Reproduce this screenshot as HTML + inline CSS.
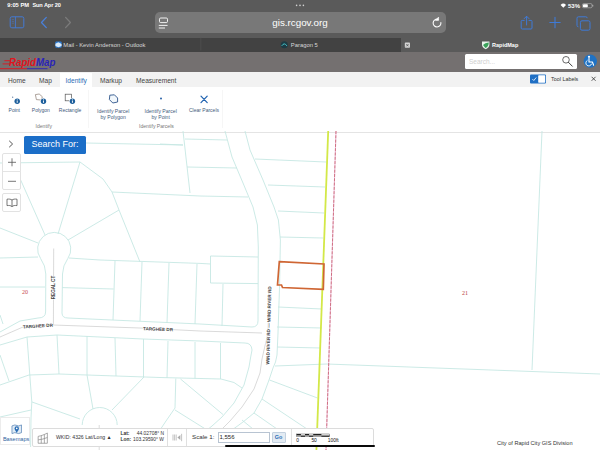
<!DOCTYPE html>
<html>
<head>
<meta charset="utf-8">
<title>RapidMap</title>
<style>
html,body{margin:0;padding:0;}
body{width:600px;height:450px;overflow:hidden;position:relative;background:#fff;font-family:"Liberation Sans",sans-serif;}
.abs{position:absolute;}
.t{position:absolute;white-space:nowrap;line-height:1;}
#chrome{left:0;top:0;width:600px;height:38px;background:#5a5a5a;}
#tabs{left:0;top:37.8px;width:600px;height:14px;background:#424242;}
#tabact{left:400.5px;top:37.8px;width:199.5px;height:14px;background:#5a5a5a;}
#apphdr{left:0;top:51.8px;width:600px;height:19.8px;background:#747070;}
#url{left:154.6px;top:12.2px;width:291.4px;height:21.2px;background:#787878;border-radius:5px;}
#rtabs{left:0;top:71.6px;width:600px;height:15px;background:#f2f2f2;}
#ribbon{left:0;top:87px;width:600px;height:45.3px;background:#fff;border-bottom:0.8px solid #e4e4e4;}
#map{left:0;top:131px;width:600px;height:319px;}
</style>
</head>
<body>
<!-- browser chrome -->
<div id="chrome" class="abs"></div>
<div class="t" style="left:7.3px;top:2.7px;font-size:5.75px;font-weight:bold;color:#fff;">9:05 PM</div>
<div class="t" style="left:32.4px;top:2.7px;font-size:5.6px;font-weight:bold;color:#fff;letter-spacing:-0.1px;">Sun Apr 20</div>
<div class="t" style="left:568px;top:2.5px;font-size:6px;font-weight:bold;color:#fff;">53%</div>
<div id="url" class="abs"></div>
<div class="t" style="left:272.3px;top:17.6px;font-size:9.8px;color:#fff;">gis.rcgov.org</div>
<div id="tabs" class="abs"></div>
<div id="tabact" class="abs"></div>
<div class="t" style="left:63.3px;top:42.9px;font-size:5.85px;color:#d8d8d8;">Mail - Kevin Anderson - Outlook</div>
<div class="t" style="left:290.8px;top:42.9px;font-size:5.85px;color:#d8d8d8;">Paragon 5</div>
<div class="t" style="left:492px;top:43.1px;font-size:5.5px;font-weight:bold;color:#fff;">RapidMap</div>

<!-- chrome icons -->
<svg class="abs" style="left:0;top:0;" width="600" height="52" viewBox="0 0 600 52">
<circle cx="296.6" cy="5.4" r="0.8" fill="#d0d0d0"/><circle cx="300" cy="5.4" r="0.8" fill="#d0d0d0"/><circle cx="303.4" cy="5.4" r="0.8" fill="#d0d0d0"/>
<!-- wifi -->
<path d="M560.6,4.9 A3.9,3.9 0 0 1 566,4.9 L563.3,7.8 Z" fill="#fff"/>
<!-- battery -->
<rect x="582.4" y="3.6" width="9.6" height="4.2" rx="1.2" fill="none" stroke="#cfcfcf" stroke-width="0.5"/>
<rect x="583" y="4.2" width="4.8" height="3" rx="0.7" fill="#fff"/>
<rect x="592.5" y="4.9" width="0.7" height="1.6" fill="#cfcfcf"/>
<!-- sidebar -->
<rect x="10.2" y="16.8" width="13.6" height="11" rx="1.6" fill="none" stroke="#4479d2" stroke-width="1"/>
<path d="M15.4,16.8 V27.8" stroke="#4479d2" stroke-width="0.9"/>
<path d="M11.8,19.6 H14 M11.8,21.4 H14 M11.8,23.2 H14" stroke="#4479d2" stroke-width="0.5"/>
<!-- back / fwd -->
<path d="M46.3,17.4 L41.5,22.5 L46.3,27.6" fill="none" stroke="#4a80da" stroke-width="1.3" stroke-linecap="round" stroke-linejoin="round"/>
<path d="M65.6,17.4 L70.4,22.5 L65.6,27.6" fill="none" stroke="#7b7b7b" stroke-width="1.3" stroke-linecap="round" stroke-linejoin="round"/>
<!-- reader -->
<rect x="159.5" y="18" width="8" height="4.6" rx="1.2" fill="none" stroke="#fff" stroke-width="0.9"/>
<path d="M159.2,25.4 H167.2 M159.2,28 H164.6" stroke="#fff" stroke-width="0.9" stroke-linecap="round"/>
<!-- reload -->
<path d="M440.9,22.6 A3.9,3.9 0 1 1 438,19.3" fill="none" stroke="#fff" stroke-width="1.1" stroke-linecap="round"/>
<path d="M438.6,17 V20.4 H435.4 Z" fill="#fff" stroke="#fff" stroke-width="0.5" stroke-linejoin="round"/>
<!-- share -->
<path d="M524.6,20.4 H522.2 Q521.2,20.4 521.2,21.4 V28 Q521.2,29 522.2,29 H531 Q532,29 532,28 V21.4 Q532,20.4 531,20.4 H528.6" fill="none" stroke="#3f7ad6" stroke-width="1"/>
<path d="M526.6,25 V16.4 M524.2,18.6 L526.6,16.2 L529,18.6" fill="none" stroke="#3f7ad6" stroke-width="1" stroke-linecap="round" stroke-linejoin="round"/>
<!-- plus -->
<path d="M549.8,22.5 H560.2 M555,17.3 V27.7" stroke="#3f7ad6" stroke-width="1.1" stroke-linecap="round"/>
<!-- tabs -->
<rect x="580.4" y="20.8" width="9.6" height="9.4" rx="1.6" fill="#5a5a5a" stroke="#3f7ad6" stroke-width="1"/>
<path d="M578.4,26.8 Q577,26.8 577,25.4 V18.2 Q577,16.8 578.4,16.8 H585.8 Q587.2,16.8 587.2,18.2" fill="none" stroke="#3f7ad6" stroke-width="1"/>
<!-- tab separators / icons -->
<rect x="200.6" y="37.5" width="0.6" height="13" fill="#555"/>
<rect x="55.4" y="41.5" width="6.2" height="6.2" rx="0.8" fill="#2c7cd4"/>
<path d="M55.4,43.7 L58.4,42.3 L61.6,44.1 V46.1 L58.4,47.3 L55.4,45.9 Z" fill="#d7e9fb"/>
<circle cx="284.3" cy="44.7" r="3.5" fill="#1d3b44"/>
<path d="M281.7,45.9 Q284.3,41.9 286.9,45.9" fill="none" stroke="#46c2c8" stroke-width="1"/>
<rect x="404.8" y="42.6" width="5.2" height="5.2" rx="0.8" fill="#d4d4d4"/>
<path d="M406.3,44.1 L408.5,46.3 M408.5,44.1 L406.3,46.3" stroke="#444" stroke-width="0.7"/>
<path d="M482,41.4 H489.4 V44.6 Q489.4,48 485.7,49.2 Q482,48 482,44.6 Z" fill="#e9f4ec"/>
<path d="M483,45 Q485,42.6 488.8,42.4 Q488.6,46.6 485.4,48 Z" fill="#3aa35a"/>
</svg>
<!-- app header -->
<div id="apphdr" class="abs"></div>
<div class="t" style="left:9.4px;top:57.4px;font-size:11.5px;font-weight:bold;font-style:italic;color:#e0141e;transform:scaleX(0.845);transform-origin:0 0;">Rapid<span style="color:#2a24b8;">Map</span></div>
<div class="abs" style="left:465px;top:54px;width:112px;height:15px;background:#fff;border-radius:1.5px;"></div>
<div class="t" style="left:469px;top:58.5px;font-size:6.5px;color:#cfcfcf;">Search...</div>
<!-- ribbon tabs -->
<div id="rtabs" class="abs"></div>
<div class="abs" style="left:60px;top:73px;width:31.6px;height:14px;background:#fff;"></div>
<div class="t" style="left:8px;top:77.9px;font-size:6.6px;color:#444;">Home</div>
<div class="t" style="left:39px;top:77.9px;font-size:6.6px;color:#444;">Map</div>
<div class="t" style="left:65.5px;top:77.9px;font-size:6.6px;color:#2a6db5;">Identify</div>
<div class="t" style="left:100px;top:77.9px;font-size:6.6px;color:#444;">Markup</div>
<div class="t" style="left:136px;top:77.9px;font-size:6.6px;color:#444;">Measurement</div>
<div class="t" style="left:551px;top:76.5px;font-size:5.4px;color:#333;">Tool Labels</div>
<!-- app header icons -->
<svg class="abs" style="left:0;top:51px;" width="600" height="36" viewBox="0 51 600 36">
<path d="M4.4,60.7 H11 M2.6,63.9 H10 M0,68.7 H27" stroke="#e0141e" stroke-width="0.9"/><path d="M27,68.7 H47.5" stroke="#2a24b8" stroke-width="0.9"/>
<circle cx="566" cy="59.8" r="3.3" fill="none" stroke="#444" stroke-width="0.8"/>
<path d="M568.4,62.3 L572.3,66.2" stroke="#444" stroke-width="1" stroke-linecap="round"/>
<circle cx="590.3" cy="61.2" r="6.6" fill="#1f72c4"/>
<circle cx="589" cy="56.8" r="1.1" fill="#fff"/>
<path d="M589,58.4 V62 H592.4 L593.6,65.2" fill="none" stroke="#fff" stroke-width="1.1" stroke-linecap="round" stroke-linejoin="round"/>
<path d="M587.2,60.4 A3,3 0 1 0 591.6,64" fill="none" stroke="#fff" stroke-width="0.9" stroke-linecap="round"/>
<!-- toggle -->
<rect x="530" y="74.5" width="16" height="9" rx="1" fill="#1f6fc4"/>
<rect x="538.2" y="75.3" width="7" height="7.4" rx="0.6" fill="#fff"/>
<path d="M532.4,79.1 L533.8,80.5 L536.2,77.5" fill="none" stroke="#fff" stroke-width="0.8"/>
<path d="M591.6,76.8 L595.6,80.8 M595.6,76.8 L591.6,80.8" stroke="#333" stroke-width="0.8"/>
</svg>
<!-- ribbon -->
<div id="ribbon" class="abs"></div>
<div class="t" style="left:8.6px;top:108.1px;font-size:5px;color:#3f5a7c;">Point</div>
<div class="t" style="left:31.8px;top:108.1px;font-size:5px;color:#3f5a7c;">Polygon</div>
<div class="t" style="left:58.8px;top:108.1px;font-size:5px;color:#3f5a7c;">Rectangle</div>
<div class="t" style="left:35.5px;top:123.8px;font-size:5.1px;color:#777;">Identify</div>
<div class="t" style="left:97px;top:107.9px;font-size:5.1px;color:#3f5a7c;text-align:center;line-height:6.2px;">Identify Parcel<br>by Polygon</div>
<div class="t" style="left:144.5px;top:107.9px;font-size:5.1px;color:#3f5a7c;text-align:center;line-height:6.2px;">Identify Parcel<br>by Point</div>
<div class="t" style="left:189px;top:108.1px;font-size:5px;color:#3f5a7c;">Clear Parcels</div>
<div class="t" style="left:139px;top:123.8px;font-size:5.1px;color:#777;">Identify Parcels</div>

<svg class="abs" style="left:0;top:86px;" width="240" height="46" viewBox="0 86 240 46">
<circle cx="12.7" cy="97.2" r="0.6" fill="#4a6c94"/>
<circle cx="17.2" cy="101.3" r="2.7" fill="#1d5f9c"/><rect x="16.75" y="100.6" width="0.9" height="2.2" fill="#fff"/><circle cx="17.2" cy="99.8" r="0.5" fill="#fff"/>
<path d="M35.4,94.6 L39.2,94 L42.4,96.8 L41,100 L36.4,99.6 Z" fill="none" stroke="#8a7a70" stroke-width="0.7"/>
<circle cx="43.5" cy="101.3" r="3.3" fill="#fff"/>
<circle cx="43.5" cy="101.3" r="2.7" fill="#1d5f9c"/><rect x="43.05" y="100.6" width="0.9" height="2.2" fill="#fff"/><circle cx="43.5" cy="99.8" r="0.5" fill="#fff"/>
<rect x="65.2" y="94.2" width="6.4" height="6.6" fill="none" stroke="#555" stroke-width="0.7"/>
<circle cx="72.4" cy="101.3" r="3.3" fill="#fff"/>
<circle cx="72.4" cy="101.3" r="2.7" fill="#1d5f9c"/><rect x="71.95" y="100.6" width="0.9" height="2.2" fill="#fff"/><circle cx="72.4" cy="99.8" r="0.5" fill="#fff"/>
<path d="M109.8,95.2 L114.4,94.8 L117.6,98 L117.6,102 L112.8,103 L109.4,99.6 Z" fill="#f1f7fc" stroke="#2d548a" stroke-width="0.9" stroke-linejoin="round"/>
<circle cx="161" cy="98.6" r="1" fill="#2a62a8"/>
<path d="M201,96.2 L207.2,102.6 M207.2,96.2 L201,102.6" stroke="#1f62b0" stroke-width="1.2" stroke-linecap="round"/>
<rect x="88" y="90" width="0.5" height="38" fill="#ececec"/>
<rect x="222.5" y="90" width="0.5" height="38" fill="#ececec"/>
</svg>
<!-- map -->
<div id="map" class="abs">
<svg id="mapsvg" width="600" height="319" viewBox="0 131 600 319" style="position:absolute;left:0;top:0;">
<g fill="none" stroke="#c6e8e3" stroke-width="0.9" stroke-linejoin="round">
<path d="M0,163 L80,162"/>
<path d="M80,162 L103,179 L112,192 L119,210 L140,262"/>
<path d="M80,162 L58,234"/>
<path d="M119,210 L68,240"/>
<path d="M0,135 L22,183 L45,235"/>
<path d="M0,228 L38,243"/>
<path d="M0,258 L38,257"/>
<path d="M112,192 L200,196 L248,197"/>
<path d="M86,143 L183,145"/>
<path d="M160,144 L183,145"/>
<path d="M183,131 L190,193"/>
<path d="M185,139 L227,140"/>
<path d="M187,167 L237,168"/>
<path d="M45.8,274 Q45.6,265.5 40.6,258.5 A16.6,16.6 0 1 1 67.8,258.5 Q62.8,265.5 62.5,274"/>
<path d="M45.8,274 L45.6,312 Q45.5,318 38,318 L20,321 L0,332"/>
<path d="M62.5,274 L62,313 Q62,318 68,318 L200,324 L252,327 Q258,327 258,321"/>
<path d="M0,345 L27,337 L57,335 L143,339 L200,341 L245,343 Q251.6,343 252,350 L250.5,358 L249,367 L244,385 L234,403 L222,417 L212,426 L207,430"/>
<path d="M69,258 L100,260 L200,263.4 L210.5,264"/>
<path d="M62.3,287.6 L113.6,289"/>
<path d="M115,261 L113,320"/>
<path d="M142,262 L140,321"/>
<path d="M169,263 L167,323"/>
<path d="M197,264 L195,324"/>
<path d="M223,284 L222,326"/>
<path d="M210.5,283 L210.5,256 L258,257"/>
<path d="M210.5,283 L258,283.6"/>
<path d="M0,287 L45,287"/>
<path d="M0,315 L3,324"/>
<path d="M27,337 L31.8,402 L31,418 L30.6,447"/>
<path d="M57,335 L59,374"/>
<path d="M87,336 L87,375"/>
<path d="M115,338 L116,376"/>
<path d="M143.5,339 L143.5,377"/>
<path d="M168,341 L167,378"/>
<path d="M195,342 L195,378.5"/>
<path d="M220.5,343 L220.5,379"/>
<path d="M0,385 L29,375 L59,374 L87,375 L160,377.5 L221,379 L234,382.5 L242,388"/>
<path d="M0,355 L9,381"/>
<path d="M0,417 L31,410"/>
<path d="M32,402 L80,419"/>
<path d="M87,375 L93,409"/>
<path d="M144,377 L112,410"/>
<path d="M117.2,425 A17.5,17.5 0 1 0 82.2,425"/>
<path d="M225,131 L232,157 L243,183 L253,207 L257.4,225 L258.3,247 L258,321"/>
<path d="M245,131 L250,150 L263,180 L274,207 L278.4,220 L280.4,240 L279.6,285 L278,333 L277,355 L275.5,362 L273,368 L269,380 L262,399 L254,413 L243,422 L232,430"/>
<path d="M255,159 L326,162"/>
<path d="M268,185 L325,187"/>
<path d="M278,211 L324,213"/>
<path d="M280,237 L323,238"/>
<path d="M278,307 L322,309"/>
<path d="M277,327 L322,328"/>
<path d="M277,347 L321,348"/>
<path d="M275,366 L327,364 L600,374"/>
<path d="M269.5,380 L317.5,398"/>
<path d="M262,399 L307,429"/>
<path d="M254,413 L277,429"/>
<path d="M242,420 L253,429"/>
<path d="M180.5,379 L223,414.5"/>
<path d="M175.8,378.5 L175,408 L166,421 L160,430"/>
<path d="M175,410 L207,430"/>
<path d="M542,131 L532,370"/>
</g>
<g fill="none" stroke="#b4b4b4" stroke-width="0.5">
<path d="M53.7,248.5 L53.4,325"/>
<path d="M0,337 L23,327 L53,325 L140,328 L200,331 L262,333"/>
<path d="M269,286 L268,333 L264,350 L262,359 L260,373 L254,389 L242,407 L230,421 L221,430"/>
<path d="M99.2,425 L99.2,450"/>
</g>
<path d="M328.2,131 L316.4,450" stroke="#d3e848" stroke-width="1.8" fill="none"/>
<path d="M336,131 L326,450" stroke="#ecb0d4" stroke-width="0.9" fill="none"/>
<path d="M336,131 L326,450" stroke="#c0505a" stroke-width="0.7" stroke-dasharray="3 1.3" fill="none"/>
<path d="M279.3,261.7 L324,264 L323.3,289.3 L282.5,287.5 L281.5,285 L277.5,285 Z" stroke="#cf6634" stroke-width="1.7" fill="none" stroke-linejoin="miter"/>
<text x="25" y="294" font-size="6" fill="#c8484e" text-anchor="middle" font-family="Liberation Serif,serif">20</text>
<text x="465" y="295" font-size="6" fill="#b83a3e" text-anchor="middle" font-family="Liberation Serif,serif">21</text>
<g font-family="Liberation Sans,sans-serif" font-size="4.6" font-weight="bold" fill="#404040" stroke="#fff" stroke-width="1.2" paint-order="stroke" text-anchor="middle">
<text transform="translate(38,327.6) rotate(-3.5)">TARGHEE DR</text>
<text transform="translate(158,330.8) rotate(2)">TARGHEE DR</text>
<text transform="translate(55.3,287.5) rotate(-90)">REGAL CT</text>
<text transform="translate(270.3,325.5) rotate(-88.5)">WIND RIVER RD &#8212; WIND RIVER RD</text>
</g>
</svg>
</div>

<!-- map overlays -->
<div class="abs" style="left:0;top:133.2px;width:22px;height:20px;background:#fff;"></div>
<svg class="abs" style="left:7px;top:139px;" width="8" height="10" viewBox="0 0 8 10"><path d="M2.2,1.8 L5.6,5 L2.2,8.2" fill="none" stroke="#555" stroke-width="1"/></svg>
<div class="abs" style="left:24px;top:135.5px;width:62px;height:18.5px;background:#1b6ec8;border-radius:1.5px;"></div>
<div class="t" style="left:31.6px;top:140.2px;font-size:9px;color:#fff;">Search For:</div>
<div class="abs" style="left:2px;top:153px;width:19px;height:37px;background:#fff;border:0.6px solid #e2e2e2;border-radius:2px;box-sizing:border-box;"></div>
<div class="abs" style="left:2.5px;top:171.3px;width:18px;height:0.6px;background:#e4e4e4;"></div>
<svg class="abs" style="left:7px;top:157px;" width="10" height="30" viewBox="0 0 10 30"><path d="M1,5.3 H9 M5,1.3 V9.3 M1,24.3 H9" fill="none" stroke="#555" stroke-width="0.8"/></svg>
<div class="abs" style="left:2px;top:193px;width:19px;height:19px;background:#fff;border:0.6px solid #e2e2e2;border-radius:2px;box-sizing:border-box;"></div>
<svg class="abs" style="left:6px;top:198px;" width="12" height="10" viewBox="0 0 12 10"><path d="M6,2 C4.8,1.1 3,0.9 1,1.2 V7.6 C3,7.3 4.8,7.5 6,8.6 C7.2,7.5 9,7.3 11,7.6 V1.2 C9,0.9 7.2,1.1 6,2 Z M6,2 V8.6" fill="none" stroke="#555" stroke-width="0.8" stroke-linejoin="round"/></svg>
<!-- bottom widgets -->
<div class="abs" style="left:0;top:417.4px;width:29.8px;height:27.6px;background:rgba(255,255,255,0.94);border:0.6px solid #ececec;box-sizing:border-box;"></div>
<svg class="abs" style="left:10.8px;top:424.3px;" width="11.5" height="11.5" viewBox="0 0 12 12"><path d="M1,2 L4,1 L8,2 L11,1 V9 L8,10 L4,9 L1,10 Z" fill="#dfeaf5" stroke="#4a7ab0" stroke-width="0.7"/><circle cx="6" cy="4.6" r="2.3" fill="#2a6db5"/><path d="M4.2,6 L6,9.4 L7.8,6 Z" fill="#2a6db5"/><circle cx="6" cy="4.5" r="0.9" fill="#fff"/></svg>
<div class="t" style="left:2.9px;top:437.1px;font-size:5.6px;color:#2f62a0;">Basemaps</div>
<div class="abs" style="left:31.6px;top:428px;width:342.6px;height:18.5px;background:#fff;border:0.6px solid #dcdcdc;border-radius:2px;box-sizing:border-box;"></div>
<svg class="abs" style="left:36.5px;top:431.5px;" width="11.5" height="12.5" viewBox="0 0 10 10" preserveAspectRatio="none"><path d="M1,9 V3.5 C3.5,3 6.5,2.2 9,0.8 V9 Z M1,6.3 C4,6 6.5,5.4 9,4.4 M3.7,9 V3 M6.4,9 V2.2" fill="none" stroke="#8a8a8a" stroke-width="0.6"/></svg>
<div class="t" style="left:56px;top:434.7px;font-size:5.15px;color:#333;">WKID: 4326 Lat/Long &#9650;</div>
<div class="t" style="left:120.5px;top:431.8px;font-size:4.9px;font-weight:bold;color:#333;">Lat:</div>
<div class="t" style="left:120.5px;top:438.2px;font-size:4.9px;font-weight:bold;color:#333;">Lon:</div>
<div class="t" style="left:100px;width:64px;text-align:right;top:431.8px;font-size:4.9px;color:#333;">44.02708&deg; N</div>
<div class="t" style="left:100px;width:64px;text-align:right;top:438.2px;font-size:4.9px;color:#333;">103.29590&deg; W</div>
<div class="abs" style="left:167px;top:428.5px;width:0.6px;height:17.5px;background:#e0e0e0;"></div>
<svg class="abs" style="left:172px;top:433px;" width="11" height="9" viewBox="0 0 11 9"><path d="M1,1.5 V7.5 M2.6,1.5 V7.5 M4.2,1.5 V7.5 M9.6,0.8 V8.2" fill="none" stroke="#aaa" stroke-width="0.7"/><path d="M8.4,2 V7 L5.4,4.5 Z" fill="#aaa"/></svg>
<div class="abs" style="left:186px;top:428.5px;width:0.6px;height:17.5px;background:#e0e0e0;"></div>
<div class="t" style="left:192px;top:434.1px;font-size:6.2px;color:#333;">Scale 1:</div>
<div class="abs" style="left:217.5px;top:432px;width:52px;height:10.5px;background:#fff;border:0.6px solid #b8c4d2;box-sizing:border-box;"></div>
<div class="t" style="left:219.5px;top:434.3px;font-size:6px;color:#222;">1,556</div>
<div class="abs" style="left:272px;top:432px;width:13.5px;height:10.5px;background:#e3ebf3;border:0.6px solid #c2d0de;box-sizing:border-box;border-radius:1px;"></div>
<div class="t" style="left:274.8px;top:434.6px;font-size:5.4px;font-weight:bold;color:#2a6db5;">Go</div>
<div class="abs" style="left:290.5px;top:428.5px;width:0.6px;height:17.5px;background:#e0e0e0;"></div>
<svg class="abs" style="left:294px;top:431px;" width="50" height="14" viewBox="294 431 50 14">
<rect x="296.8" y="434" width="32.8" height="2.8" fill="#fff" stroke="#222" stroke-width="0.4"/>
<path d="M296.8,434 h4.1 v1.4 h-4.1z M300.9,435.4 h4.1 v1.4 h-4.1z M305,434 h4.1 v1.4 h-4.1z M309.1,435.4 h4.1 v1.4 h-4.1z M313.2,434 h8.2 v1.4 h-8.2z M321.4,435.4 h8.2 v1.4 h-8.2z" fill="#222"/>
<g font-family="Liberation Sans,sans-serif" font-size="4.9" fill="#111"><text x="296.2" y="441.9">0</text><text x="311.4" y="441.9">50</text><text x="327.8" y="441.9">100ft</text></g>
</svg>
<div class="abs" style="left:225px;top:444.6px;width:150px;height:2.9px;background:#0a0a0a;border-radius:1.5px;"></div>
<div class="t" style="left:497px;top:440.5px;font-size:5.6px;color:#333;">City of Rapid City GIS Division</div>
</body>
</html>
